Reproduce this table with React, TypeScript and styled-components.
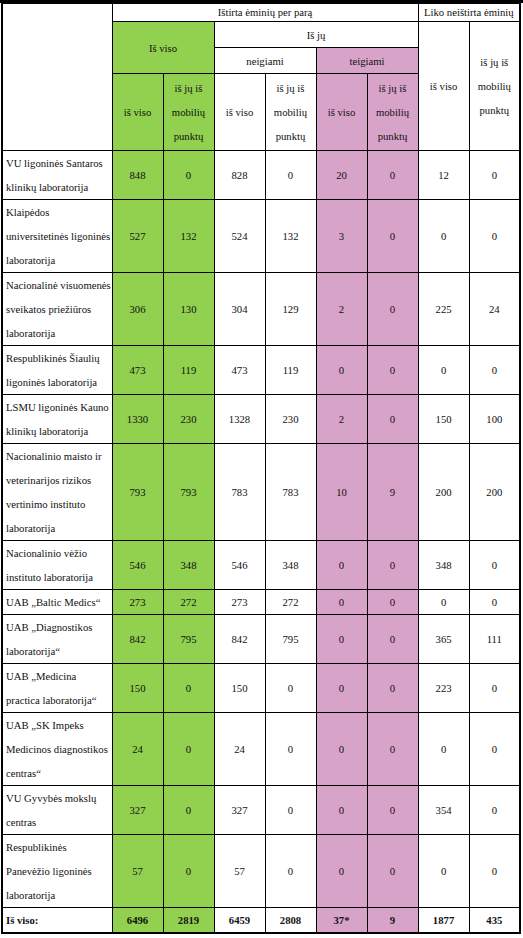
import React from "react";
import styled, { createGlobalStyle } from "styled-components";

type Tone = "green" | "pink" | "white";

interface Lab {
  name: string[];
  values: (number | string)[];
}

const GREEN = "#92d050";
const PINK = "#d8a3c9";

// kiekvienos kolonos spalva (po pavadinimo)
const tones: Tone[] = ["green", "green", "white", "white", "pink", "pink", "white", "white"];

const labs: Lab[] = [
  { name: ["VU ligoninės Santaros", "klinikų laboratorija"], values: [848, 0, 828, 0, 20, 0, 12, 0] },
  { name: ["Klaipėdos", "universitetinės ligoninės", "laboratorija"], values: [527, 132, 524, 132, 3, 0, 0, 0] },
  { name: ["Nacionalinė visuomenės", "sveikatos priežiūros", "laboratorija"], values: [306, 130, 304, 129, 2, 0, 225, 24] },
  { name: ["Respublikinės Šiaulių", "ligoninės laboratorija"], values: [473, 119, 473, 119, 0, 0, 0, 0] },
  { name: ["LSMU ligoninės Kauno", "klinikų laboratorija"], values: [1330, 230, 1328, 230, 2, 0, 150, 100] },
  {
    name: ["Nacionalinio maisto ir", "veterinarijos rizikos", "vertinimo instituto", "laboratorija"],
    values: [793, 793, 783, 783, 10, 9, 200, 200],
  },
  { name: ["Nacionalinio vėžio", "instituto laboratorija"], values: [546, 348, 546, 348, 0, 0, 348, 0] },
  { name: ["UAB „Baltic Medics“"], values: [273, 272, 273, 272, 0, 0, 0, 0] },
  { name: ["UAB „Diagnostikos", "laboratorija“"], values: [842, 795, 842, 795, 0, 0, 365, 111] },
  { name: ["UAB „Medicina", "practica laboratorija“"], values: [150, 0, 150, 0, 0, 0, 223, 0] },
  { name: ["UAB „SK Impeks", "Medicinos diagnostikos", "centras“"], values: [24, 0, 24, 0, 0, 0, 0, 0] },
  { name: ["VU Gyvybės mokslų", "centras"], values: [327, 0, 327, 0, 0, 0, 354, 0] },
  { name: ["Respublikinės", "Panevėžio ligoninės", "laboratorija"], values: [57, 0, 57, 0, 0, 0, 0, 0] },
];

const totals = [6496, 2819, 6459, 2808, "37*", 9, 1877, 435];

const Lines = ({ lines }: { lines: string[] }) => (
  <>
    {lines.map((l, i) => (
      <React.Fragment key={i}>
        {i > 0 && <br />}
        {l}
      </React.Fragment>
    ))}
  </>
);

const MobileLabel = () => <Lines lines={["iš jų iš", "mobilių", "punktų"]} />;

const App = () => {
  return (
    <Page>
      <GlobalStyle />
      <TopBar />
      <Table>
        <colgroup>
          <col style={{ width: 110 }} />
          {tones.map((_, i) => (
            <col key={i} style={{ width: 51 }} />
          ))}
        </colgroup>
        <thead>
          <TitleRow>
            <HeadCell rowSpan={4} />
            <HeadCell colSpan={6}>Ištirta ėminių per parą</HeadCell>
            <HeadCell colSpan={2}>Liko neištirta ėminių</HeadCell>
          </TitleRow>
          <HeadRow>
            <HeadCell colSpan={2} rowSpan={2} $tone="green">
              Iš viso
            </HeadCell>
            <HeadCell colSpan={4}>Iš jų</HeadCell>
            <HeadCell rowSpan={3}>iš viso</HeadCell>
            <HeadCell rowSpan={3}>
              <MobileLabel />
            </HeadCell>
          </HeadRow>
          <HeadRow>
            <HeadCell colSpan={2}>neigiami</HeadCell>
            <HeadCell colSpan={2} $tone="pink">
              teigiami
            </HeadCell>
          </HeadRow>
          <SubRow>
            <HeadCell $tone="green">iš viso</HeadCell>
            <HeadCell $tone="green">
              <MobileLabel />
            </HeadCell>
            <HeadCell>iš viso</HeadCell>
            <HeadCell>
              <MobileLabel />
            </HeadCell>
            <HeadCell $tone="pink">iš viso</HeadCell>
            <HeadCell $tone="pink">
              <MobileLabel />
            </HeadCell>
          </SubRow>
        </thead>
        <tbody>
          {labs.map((lab) => (
            <tr key={lab.name.join(" ")}>
              <NameCell>
                <Lines lines={lab.name} />
              </NameCell>
              {lab.values.map((v, i) => (
                <NumCell key={i} $tone={tones[i]}>
                  {v}
                </NumCell>
              ))}
            </tr>
          ))}
          <TotalRow>
            <NameCell>Iš viso:</NameCell>
            {totals.map((v, i) => (
              <NumCell key={i} $tone={tones[i]}>
                {v}
              </NumCell>
            ))}
          </TotalRow>
        </tbody>
      </Table>
    </Page>
  );
};

export default App;

const GlobalStyle = createGlobalStyle`
  html, body {
    margin: 0;
    padding: 0;
    background: #ffffff;
  }
`;

const FONT = `"Liberation Serif", "Times New Roman", serif`;

const Page = styled.div`
  width: 523px;
  font-family: ${FONT};
  font-size: 10.7px;
  color: #111111;
`;

const TopBar = styled.div`
  height: 3px;
  background: #000000;
`;

const Table = styled.table`
  margin-left: 1px;
  width: 520px;
  table-layout: fixed;
  border-collapse: collapse;
  border: 2px solid #000000;
  border-top-width: 1px;

  font-family: ${FONT};
  font-size: 10.7px;
  color: #111111;
`;

const toneColor = (tone?: Tone) =>
  tone === "green" ? GREEN : tone === "pink" ? PINK : "#ffffff";

const HeadCell = styled.th<{ $tone?: Tone }>`
  padding: 0;
  border: 1px solid #000000;
  background: ${({ $tone }) => toneColor($tone)};

  font-family: ${FONT};
  font-size: 10.7px;
  font-weight: normal;
  line-height: 24px;
  text-align: center;
  vertical-align: middle;
`;

const TitleRow = styled.tr`
  height: 18px;

  ${HeadCell} {
    line-height: 12px;
    vertical-align: top;
    padding-top: 2px;
  }
`;

const HeadRow = styled.tr`
  height: 26px;
`;

const SubRow = styled.tr`
  ${HeadCell} {
    padding: 2px 0;
  }
`;

const NameCell = styled.td`
  padding: 0 0 0 3px;
  border: 1px solid #000000;

  font-family: ${FONT};
  font-size: 10.7px;
  line-height: 24px;
  text-align: left;
  white-space: nowrap;
  overflow: hidden;
`;

const NumCell = styled.td<{ $tone: Tone }>`
  padding: 0;
  border: 1px solid #000000;
  background: ${({ $tone }) => toneColor($tone)};

  font-family: ${FONT};
  font-size: 10.7px;
  line-height: 24px;
  text-align: center;
  vertical-align: middle;
`;

const TotalRow = styled.tr`
  ${NameCell}, ${NumCell} {
    font-weight: bold;
  }
`;
